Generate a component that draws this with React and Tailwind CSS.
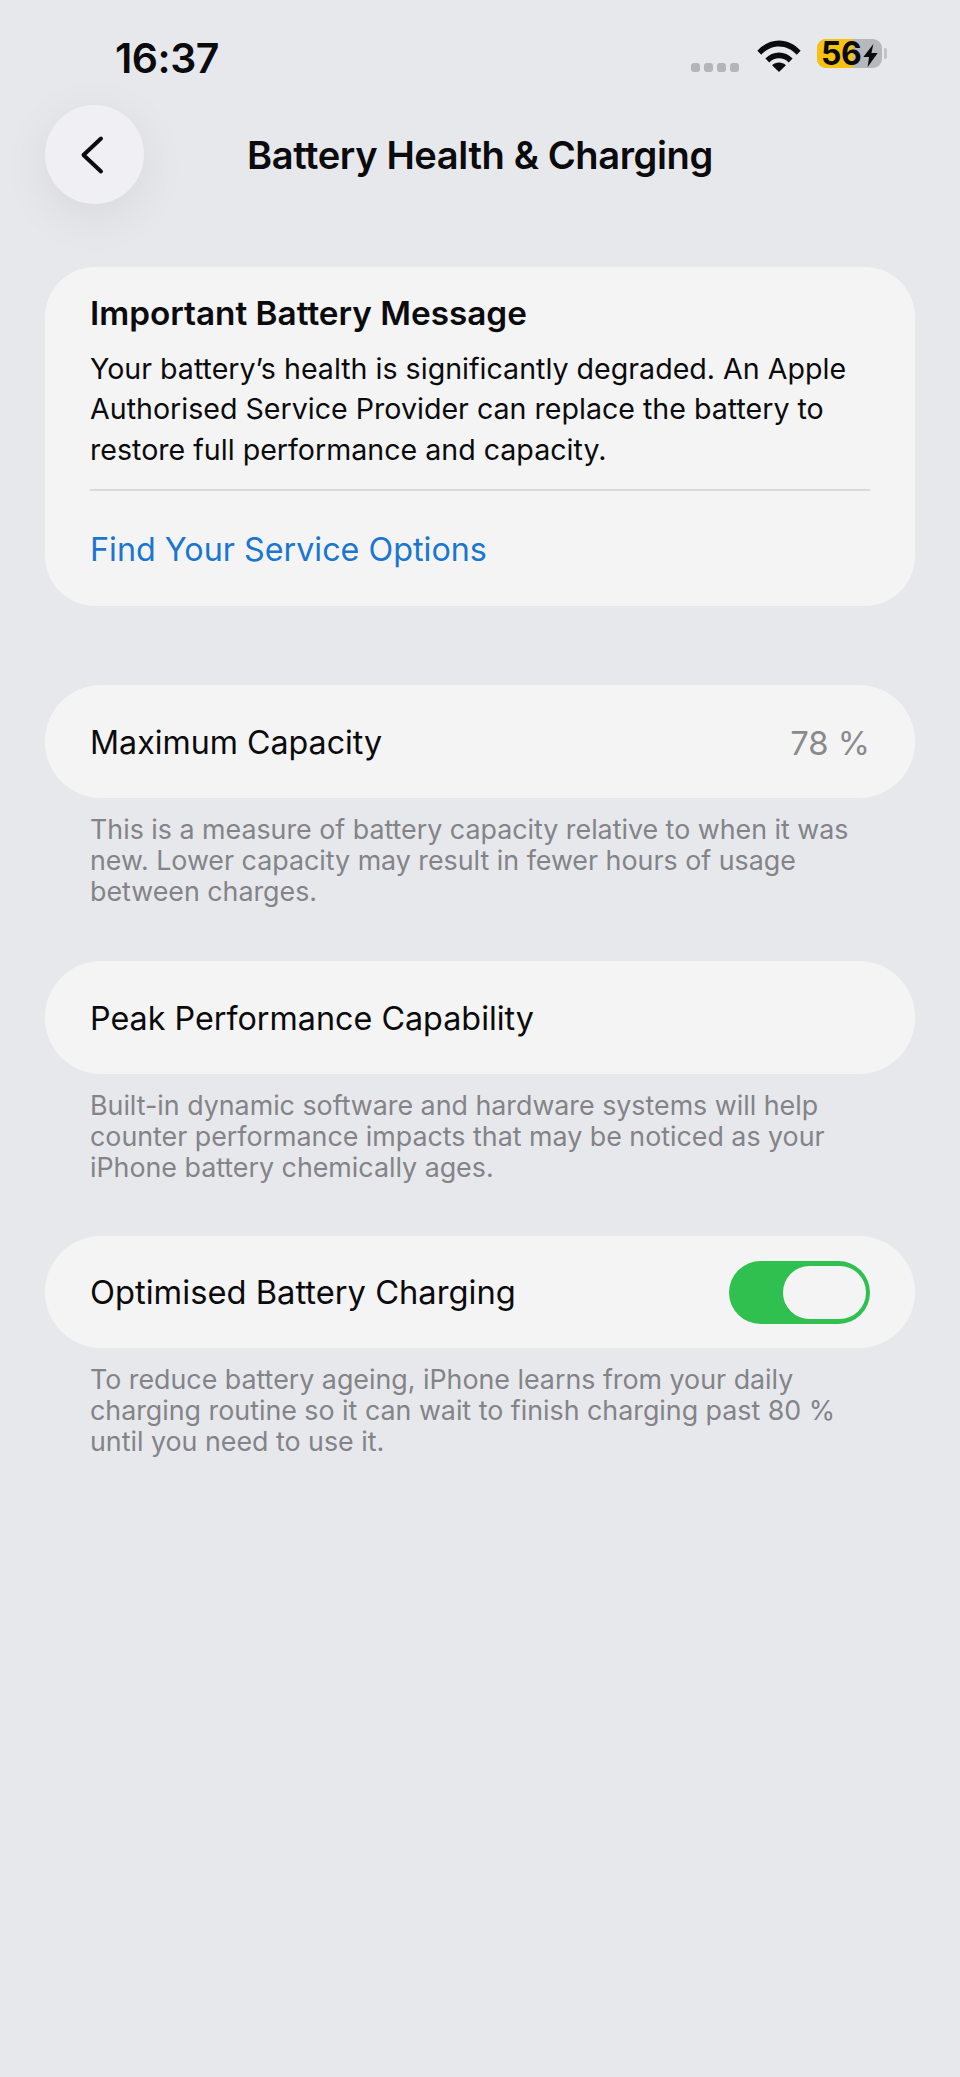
const font = { fontFamily: 'Inter, "Liberation Sans", sans-serif' };

const StatusBar = () => (
  <div className="relative h-[105px] shrink-0">
    <span className="absolute left-[115px] top-[33px] text-[41px] leading-[50px] font-semibold text-[#0b0b0d] tracking-[-0.5px]">16:37</span>
    <div className="absolute left-[691px] top-[63px] flex gap-[4px]">
      {[0, 1, 2, 3].map((i) => (
        <div key={i} className="w-[9px] h-[9px] rounded-[3px] bg-[#b4b5b8]" />
      ))}
    </div>
    <svg className="absolute left-[756px] top-[39px]" width="46" height="33" viewBox="0 0 44 32">
      <path d="M1 11.500C7 5 14 1.500 22 1.500S37 5 43 11.500l-3.800 3.800C34.500 10 28.500 7.200 22 7.200S9.500 10 4.800 15.300z" fill="#0b0b0d" />
      <path d="M8.800 19c3.500-3.800 8.200-5.900 13.200-5.900S31.700 15.200 35.200 19l-3.800 3.800C28.800 20 25.500 18.700 22 18.700s-6.800 1.300-9.400 4.100z" fill="#0b0b0d" />
      <path d="M15.300 25.500c1.800-1.700 4.200-2.600 6.700-2.600s4.900.9 6.700 2.600L22 32z" fill="#0b0b0d" />
    </svg>
    <div className="absolute left-[817px] top-[39px] w-[65px] h-[29px] rounded-[9px] bg-[#b7b8bb] overflow-hidden">
      <div className="w-[36px] h-full bg-[#f5c211]" />
    </div>
    <div className="absolute left-[884px] top-[48px] w-[3px] h-[11px] rounded-r-[2px] bg-[#c3c4c7]" />
    <span className="absolute left-[821px] top-[37px] text-[32px] leading-[33px] font-bold text-[#0b0b0d] tracking-[-0.5px]">56</span>
    <svg className="absolute left-[863px] top-[44px]" width="15" height="23" viewBox="0 0 15 24">
      <path d="M10.500 0L0 13.500h6L4.500 24 15 9.500H8.500z" fill="#0b0b0d" />
    </svg>
  </div>
);

const Card = ({ children, className }) => (
  <div className={`mx-[45px] bg-[#f4f4f5] ${className}`}>{children}</div>
);

const Caption = ({ children }) => (
  <p className="mx-[90px] mt-[16px] text-[26.800px] leading-[31px] text-[#838388]">{children}</p>
);

export default function App() {
  return (
    <div className="w-[960px] h-[2077px] bg-[#e7e8ec] flex flex-col overflow-hidden" style={font}>
      <StatusBar />
      <div className="relative h-[99px] shrink-0 flex items-center justify-center">
        <div className="absolute left-[45px] top-0 w-[99px] h-[99px] rounded-full bg-[#f0f0f4] shadow-[0_12px_50px_rgba(0,0,0,0.07)] flex items-center justify-center">
          <svg width="28" height="42" viewBox="0 0 28 42" className="mr-[5px]">
            <path d="M23 4.500L5.500 21 23 37.500" fill="none" stroke="#0b0b0d" strokeWidth="4" strokeLinecap="round" strokeLinejoin="round" />
          </svg>
        </div>
        <h1 className="text-[38.100px] leading-[48px] font-semibold text-[#0b0b0d] tracking-[-0.4px]">Battery Health &amp; Charging</h1>
      </div>

      <Card className="mt-[63px] h-[339px] rounded-[50px] px-[45px] pt-[24px]">
        <h2 className="text-[33.300px] leading-[44px] font-semibold text-[#0b0b0d]">Important Battery Message</h2>
        <p className="mt-[14px] text-[28.600px] leading-[40.300px] text-[#0b0b0d]">
          Your battery’s health is significantly degraded. An Apple Authorised Service Provider can replace the battery to restore full performance and capacity.
        </p>
        <div className="mt-[19px] h-[2px] bg-[#dadadc]" />
        <a className="block mt-[39px] text-[32.300px] leading-[40px] text-[#1b76d0]">Find Your Service Options</a>
      </Card>

      <Card className="mt-[79px] h-[113px] rounded-[56px] px-[45px] flex items-center justify-between">
        <span className="mt-[4px] text-[32.200px] text-[#0b0b0d]">Maximum Capacity</span>
        <span className="mt-[4px] text-[32.800px] text-[#8a8a8e]">78 %</span>
      </Card>
      <Caption>This is a measure of battery capacity relative to when it was new. Lower capacity may result in fewer hours of usage between charges.</Caption>

      <Card className="mt-[54px] h-[113px] rounded-[56px] px-[45px] flex items-center">
        <span className="mt-[4px] text-[32.300px] text-[#0b0b0d]">Peak Performance Capability</span>
      </Card>
      <Caption>Built-in dynamic software and hardware systems will help counter performance impacts that may be noticed as your iPhone battery chemically ages.</Caption>

      <Card className="mt-[53px] h-[112px] rounded-[56px] px-[45px] flex items-center justify-between">
        <span className="mt-[2px] text-[32.700px] text-[#0b0b0d]">Optimised Battery Charging</span>
        <div className="w-[141px] h-[63px] rounded-full bg-[#30c04f] flex items-center justify-end pr-[4px]">
          <div className="w-[83px] h-[53px] rounded-full bg-[#f4f4f5]" />
        </div>
      </Card>
      <Caption>To reduce battery ageing, iPhone learns from your daily charging routine so it can wait to finish charging past 80 % until you need to use it.</Caption>
    </div>
  );
}
